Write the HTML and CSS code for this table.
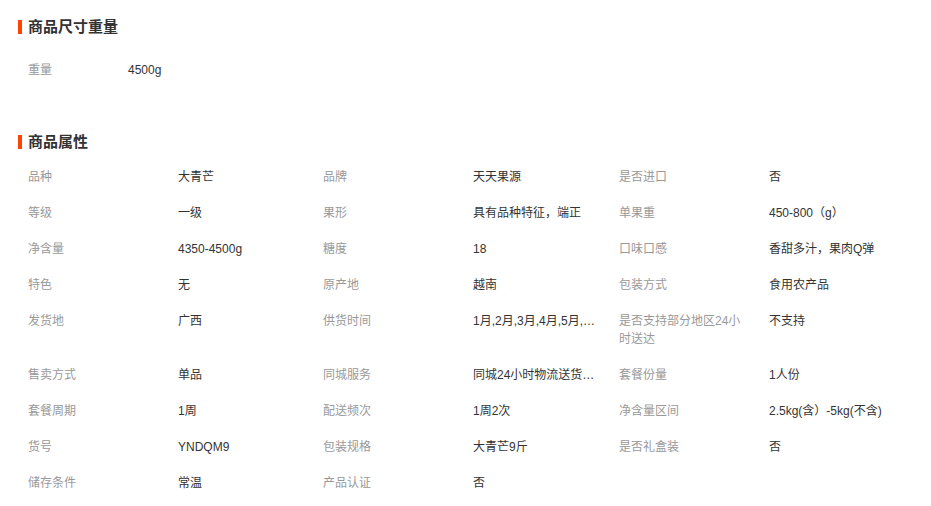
FILE: index.html
```html
<!DOCTYPE html>
<html lang="zh-CN">
<head>
<meta charset="utf-8">
<title>商品参数</title>
<link rel="stylesheet" href="styles.css">
</head>
<body>
<div class="page">
  <section class="block block-size">
    <h2 class="title"><span class="bar"></span>商品尺寸重量</h2>
    <div class="size-row">
      <span class="label size-label">重量</span>
      <span class="value">4500g</span>
    </div>
  </section>

  <section class="block block-attr">
    <h2 class="title"><span class="bar"></span>商品属性</h2>
    <div class="attr-grid">
      <div class="label">品种</div><div class="value">大青芒</div>
      <div class="label">品牌</div><div class="value">天天果源</div>
      <div class="label">是否进口</div><div class="value">否</div>

      <div class="label">等级</div><div class="value">一级</div>
      <div class="label">果形</div><div class="value">具有品种特征，端正</div>
      <div class="label">单果重</div><div class="value">450-800（g）</div>

      <div class="label">净含量</div><div class="value">4350-4500g</div>
      <div class="label">糖度</div><div class="value">18</div>
      <div class="label">口味口感</div><div class="value">香甜多汁，果肉Q弹</div>

      <div class="label">特色</div><div class="value">无</div>
      <div class="label">原产地</div><div class="value">越南</div>
      <div class="label">包装方式</div><div class="value">食用农产品</div>

      <div class="label">发货地</div><div class="value">广西</div>
      <div class="label">供货时间</div><div class="value">1月,2月,3月,4月,5月,6月,7月,8月</div>
      <div class="label">是否支持部分地区24小时送达</div><div class="value">不支持</div>

      <div class="label">售卖方式</div><div class="value">单品</div>
      <div class="label">同城服务</div><div class="value">同城24小时物流送货上门</div>
      <div class="label">套餐份量</div><div class="value">1人份</div>

      <div class="label">套餐周期</div><div class="value">1周</div>
      <div class="label">配送频次</div><div class="value">1周2次</div>
      <div class="label">净含量区间</div><div class="value">2.5kg(含）-5kg(不含)</div>

      <div class="label">货号</div><div class="value">YNDQM9</div>
      <div class="label">包装规格</div><div class="value">大青芒9斤</div>
      <div class="label">是否礼盒装</div><div class="value">否</div>

      <div class="label">储存条件</div><div class="value">常温</div>
      <div class="label">产品认证</div><div class="value">否</div>
    </div>
  </section>
</div>
</body>
</html>
```

FILE: styles.css
```css
html, body {
  margin: 0;
  padding: 0;
  background: #fff;
}

body {
  font-family: "Liberation Sans", "Noto Sans CJK SC", sans-serif;
  font-size: 12px;
  color: #333;
}

.page {
  width: 931px;
}

.title {
  display: flex;
  align-items: center;
  margin: 0 0 0 18px;
  height: 20px;
  line-height: 20px;
  font-size: 15px;
  font-weight: bold;
  color: #333;
}

.bar {
  display: inline-block;
  width: 4px;
  height: 14px;
  background: #ff4400;
  margin-right: 6px;
}

.block-size {
  padding-top: 17px;
}

.size-row {
  display: flex;
  padding-left: 28px;
  margin-top: 24px;
  line-height: 18px;
}

.size-label {
  width: 100px;
}

.label {
  color: #999;
}

.value {
  color: #333;
}

.block-attr {
  padding-top: 53px;
}

.attr-grid {
  display: grid;
  grid-template-columns: 150px 145px 150px 146px 150px 1fr;
  padding-left: 28px;
  margin-top: 7px;
  line-height: 18px;
}

.attr-grid .label,
.attr-grid .value {
  padding: 9px 0;
}

.attr-grid .label {
  padding-right: 22px;
}

.attr-grid .value {
  padding-right: 22px;
  white-space: nowrap;
  overflow: hidden;
  text-overflow: ellipsis;
}
```
